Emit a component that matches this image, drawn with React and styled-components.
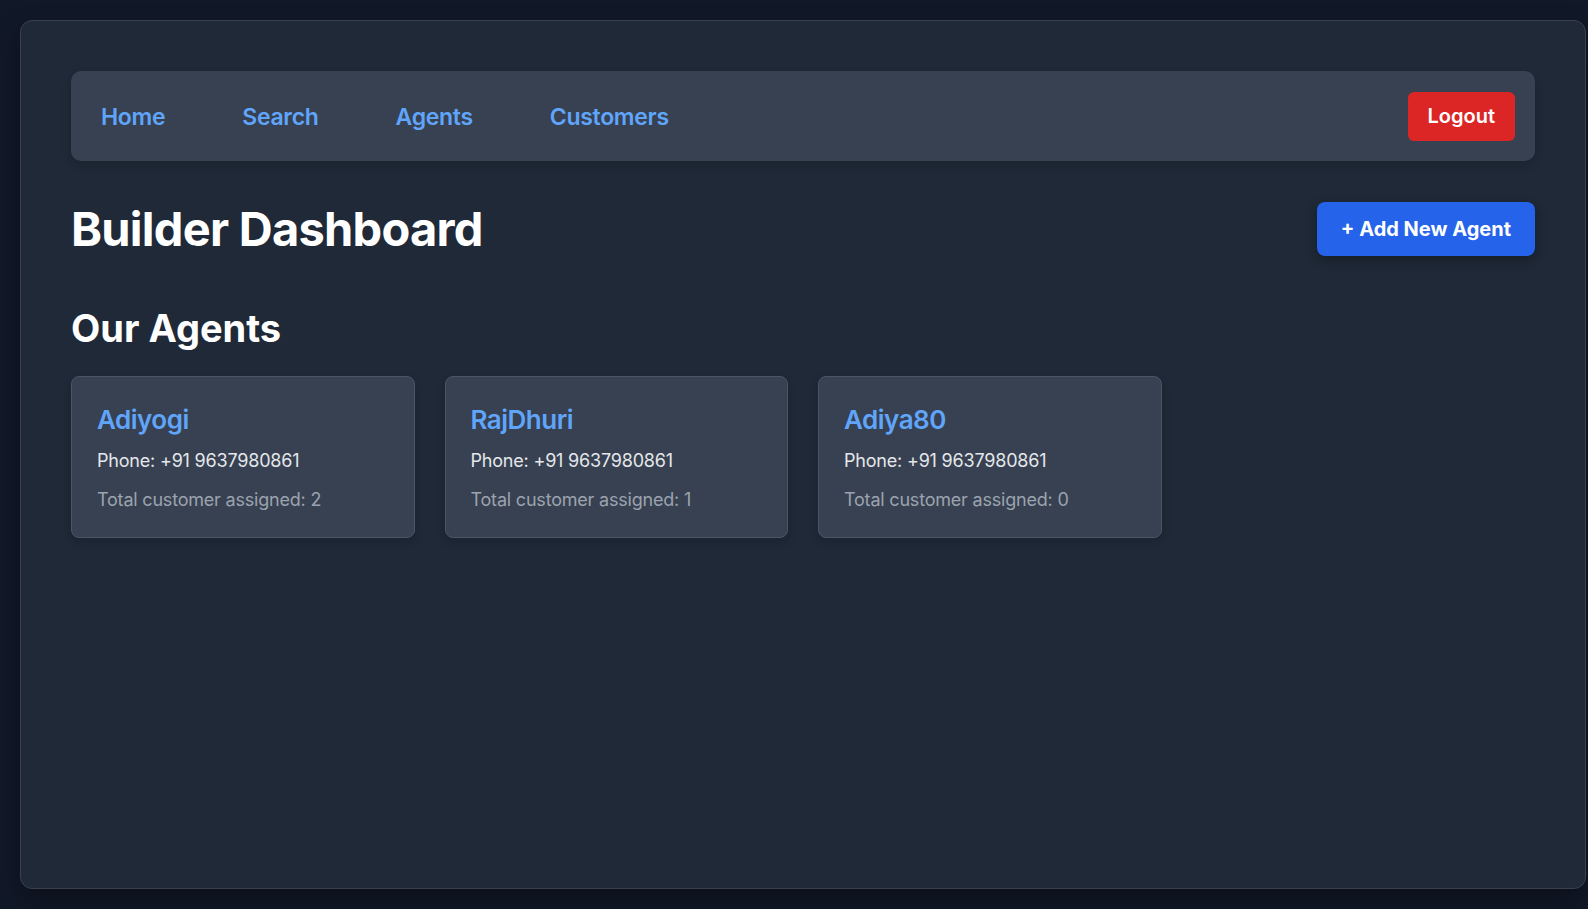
import React from "react";
import styled, { createGlobalStyle } from "styled-components";

const agents = [
  { name: "Adiyogi", phone: "+91 9637980861", total: 2 },
  { name: "RajDhuri", phone: "+91 9637980861", total: 1 },
  { name: "Adiya80", phone: "+91 9637980861", total: 0 },
];

const links = ["Home", "Search", "Agents", "Customers"];

export default function App() {
  return (
    <>
      <GlobalStyle />
      <Panel>
        <NavBar>
          <NavLinks>
            {links.map(link => (
              <NavLink key={link} href="#">
                {link}
              </NavLink>
            ))}
          </NavLinks>
          <LogoutButton>Logout</LogoutButton>
        </NavBar>

        <Header>
          <Title>Builder Dashboard</Title>
          <AddButton>+ Add New Agent</AddButton>
        </Header>

        <SectionTitle>Our Agents</SectionTitle>
        <CardGrid>
          {agents.map(agent => (
            <Card key={agent.name}>
              <AgentName>{agent.name}</AgentName>
              <Info>Phone: {agent.phone}</Info>
              <Info $muted>Total customer assigned: {agent.total}</Info>
            </Card>
          ))}
        </CardGrid>
      </Panel>
    </>
  );
}

const GlobalStyle = createGlobalStyle`
  * {
    box-sizing: border-box;
  }
  body {
    margin: 0;
    background: #111827;
    font-family: Inter, "Noto Sans", sans-serif;
    color: #f9fafb;
  }
`;

const Panel = styled.div`
  margin: 20px 2px 20px 20px;
  min-height: calc(100vh - 40px);
  padding: 50px;
  background: #1f2937;
  border: 1px solid #374151;
  border-radius: 12px;
  box-shadow: 0 10px 25px rgba(0, 0, 0, 0.35);
`;

const NavBar = styled.nav`
  display: flex;
  align-items: center;
  justify-content: space-between;
  height: 90px;
  padding: 0 20px 0 30px;
  background: #374151;
  border-radius: 10px;
  box-shadow: 0 4px 10px rgba(0, 0, 0, 0.15);
`;

const NavLinks = styled.div`
  display: flex;
  align-items: center;
  gap: 77px;
  padding-top: 2px;
`;

const NavLink = styled.a`
  color: #60a5fa;
  font-size: 23px;
  font-weight: 600;
  text-decoration: none;
  letter-spacing: -0.3px;
`;

const LogoutButton = styled.button`
  height: 49px;
  padding: 0 20px;
  border: none;
  border-radius: 6px;
  background: #dc2626;
  color: #fff;
  font-family: inherit;
  font-size: 20px;
  font-weight: 600;
  cursor: pointer;
`;

const Header = styled.div`
  display: flex;
  align-items: center;
  justify-content: space-between;
  margin-top: 40px;
`;

const Title = styled.h1`
  margin: 0;
  font-size: 47px;
  line-height: 56px;
  font-weight: 700;
  color: #fff;
  letter-spacing: -0.75px;
`;

const AddButton = styled.button`
  height: 54px;
  padding: 0 24px;
  border: none;
  border-radius: 8px;
  background: #2563eb;
  color: #fff;
  font-family: inherit;
  font-size: 20px;
  font-weight: 700;
  box-shadow: 0 4px 12px rgba(0, 0, 0, 0.3);
  cursor: pointer;
`;

const SectionTitle = styled.h2`
  margin: 48px 0 25px;
  font-size: 38px;
  line-height: 46px;
  font-weight: 700;
  color: #fff;
`;

const CardGrid = styled.div`
  display: grid;
  grid-template-columns: repeat(auto-fill, minmax(300px, 1fr));
  gap: 30px;
`;

const Card = styled.div`
  display: flex;
  flex-direction: column;
  gap: 12px;
  padding: 27px 25px 24px;
  background: #374151;
  border: 1px solid #4b5563;
  border-radius: 8px;
  box-shadow: 0 4px 8px rgba(0, 0, 0, 0.15);
`;

const AgentName = styled.h3`
  margin: 0;
  font-size: 26px;
  line-height: 31px;
  font-weight: 600;
  color: #60a5fa;
  letter-spacing: -0.5px;
`;

const Info = styled.p`
  margin: 0;
  font-size: 18px;
  line-height: 27px;
  letter-spacing: -0.2px;
  color: ${p => (p.$muted ? "#9ca3af" : "#e5e7eb")};
`;
